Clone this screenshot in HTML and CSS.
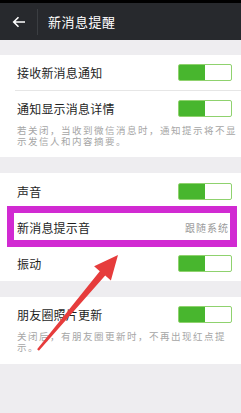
FILE: index.html
```html
<!DOCTYPE html>
<html lang="zh">
<head>
<meta charset="utf-8">
<link rel="stylesheet" href="styles.css">
</head>
<body>
<div class="page">
  <div class="status"></div>
  <header class="header">
    <div class="back">
      <svg width="14" height="12" viewBox="0 0 14 12"><path d="M13 6H2M6.5 1.2L1.7 6l4.8 4.8" fill="none" stroke="#fff" stroke-width="1.6"/></svg>
    </div>
    <div class="title">新消息提醒</div>
  </header>
  <div class="gap g1"></div>
  <section class="group s1">
    <div class="row r1"><span class="label">接收新消息通知</span><span class="toggle"></span></div>
    <div class="divider"></div>
    <div class="row r2"><span class="label">通知显示消息详情</span><span class="toggle"></span></div>
    <p class="desc">若关闭，当收到微信消息时，通知提示将不显<br>示发信人和内容摘要。</p>
  </section>
  <div class="gap g2"></div>
  <section class="group s2">
    <div class="row r3"><span class="label">声音</span><span class="toggle"></span></div>
    <div class="row r3"><span class="label">新消息提示音</span><span class="value">跟随系统</span></div>
    <div class="row r3"><span class="label">振动</span><span class="toggle"></span></div>
  </section>
  <div class="gap g2"></div>
  <section class="group s3">
    <div class="row r2"><span class="label">朋友圈照片更新</span><span class="toggle"></span></div>
    <p class="desc">关闭后，有朋友圈更新时，不再出现红点提<br>示。</p>
  </section>
  <div class="highlight"></div>
  <svg class="arrow" width="241" height="413" viewBox="0 0 241 413">
    <polygon points="118,255 94.1,266.3 99.8,271.2 37.1,349.2 38.9,350.8 105.2,275.6 110.9,280.5" fill="#e63c3c"/>
  </svg>
</div>
</body>
</html>
```
FILE: styles.css
```css
* { box-sizing: border-box; margin: 0; padding: 0; }
body {
  margin: 0;
  width: 241px;
  height: 413px;
  overflow: hidden;
  background: #eeedf0;
  font-family: "Noto Sans CJK SC", "Noto Sans", sans-serif;
}
.page { position: relative; width: 241px; height: 413px; }
.status { height: 3px; background: #000; }
.header {
  height: 37px;
  background: #27292d;
  display: flex;
  align-items: center;
}
.back {
  width: 38px;
  height: 26px;
  border-right: 1px solid #3b3e42;
  display: flex;
  align-items: center;
  padding-left: 12px;
}
.title {
  color: #fff;
  font-size: 13px;
  letter-spacing: 0.5px;
  padding-left: 10px;
}
.gap.g1 { height: 15px; }
.gap.g2 { height: 16px; }
.group { background: #fff; }
.s1 { padding-bottom: 10px; }
.s3 { padding-bottom: 11px; }
.row {
  display: flex;
  align-items: center;
  justify-content: space-between;
  padding: 0 9px 0 17px;
}
.r1 { height: 35px; }
.r2 { height: 34px; }
.r3 { height: 36px; }
.divider { height: 1px; background: #e6e6e6; margin-left: 15px; }
.label {
  font-size: 12px;
  color: #1e1e1e;
  letter-spacing: 0.2px;
}
.value {
  font-size: 10px;
  color: #9a9a9a;
  letter-spacing: 1px;
  margin-right: 3px;
}
.toggle {
  width: 54px;
  height: 17px;
  border: 1px solid #8fd26e;
  border-radius: 2px;
  background: linear-gradient(to right, #48b62e 0, #48b62e 26px, #fff 26px);
}
.desc {
  font-family: "Liberation Sans", "Noto Sans CJK SC", sans-serif;
  font-size: 9.5px;
  line-height: 11px;
  letter-spacing: 1.5px;
  color: #a6a6a6;
  padding: 0 0 0 17px;
  white-space: nowrap;
}
.highlight {
  position: absolute;
  left: 7px;
  top: 206px;
  width: 230px;
  height: 41px;
  border: 7px solid #d12ad2;
}
.arrow { position: absolute; left: 0; top: 0; }
```
